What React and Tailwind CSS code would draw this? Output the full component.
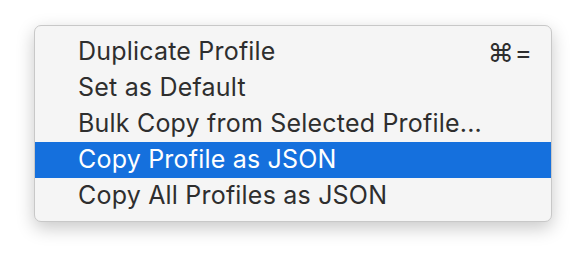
const items = [
  { label: "Duplicate Profile", shortcut: "⌘=" },
  { label: "Set as Default" },
  { label: "Bulk Copy from Selected Profile..." },
  { label: "Copy Profile as JSON", active: true },
  { label: "Copy All Profiles as JSON" },
];

export default function App() {
  return (
    <div className="w-[586px] h-[264px] bg-white pt-[25px] pl-[34px]">
      <div
        className="w-[518px] h-[197px] bg-[#f5f5f5] rounded-[7px] border border-[#c8c8c8] pt-[8px] shadow-[0_6px_18px_rgba(0,0,0,0.22)]"
        style={{ fontFamily: "Inter, 'Noto Sans', sans-serif" }}
      >
        <ul>
          {items.map((item) => (
            <li
              key={item.label}
              className={
                item.active
                  ? "h-[36px] flex items-center justify-between pl-[43px] pr-[18px] bg-[#1570dd] text-white text-[25px] tracking-[0.2px]"
                  : "h-[36px] flex items-center justify-between pl-[43px] pr-[18px] text-[#2e2e2e] text-[25px] tracking-[0.2px]"
              }
            >
              <span>{item.label}</span>
              {item.shortcut && <span className="text-[26px] tracking-[1px]">{item.shortcut}</span>}
            </li>
          ))}
        </ul>
      </div>
    </div>
  );
}
